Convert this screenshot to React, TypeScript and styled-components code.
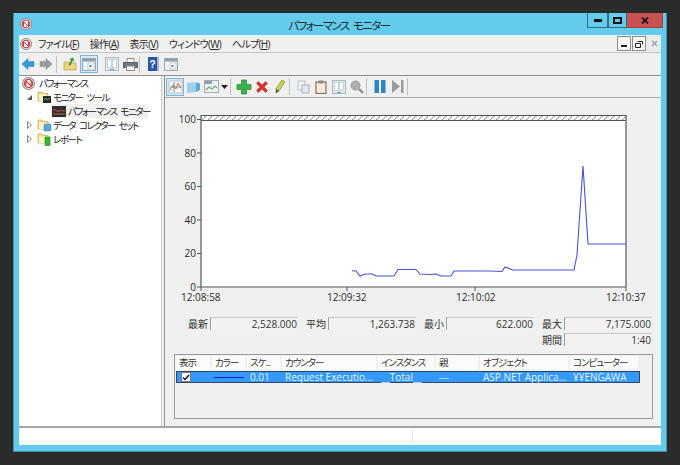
import React from "react";
import styled, { createGlobalStyle } from "styled-components";

const GlobalStyle = createGlobalStyle`
  html, body {
    margin: 0;
    padding: 0;
    background: #2b2b2b;
  }
  body {
    font-family: "Open Sans", "Noto Sans CJK JP", sans-serif;
    font-feature-settings: "palt";
    font-size: 10px;
    color: #222;
  }
  * {
    box-sizing: border-box;
  }
`;

const Desktop = styled.div`
  width: 680px;
  height: 465px;
  padding: 13px;
  background: #2b2b2b;
  overflow: hidden;
`;

const Window = styled.div`
  width: 654px;
  height: 439px;
  background: #63cbeb;
  border: 1px solid #3d8fa8;
  border-top: none;
  display: flex;
  flex-direction: column;
  padding: 0 5px 6px 5px;
`;

const TitleBar = styled.div`
  height: 22px;
  flex: none;
  display: flex;
  align-items: center;
  position: relative;
  margin: 0 -5px;
  padding-left: 6px;
`;

const Title = styled.div`
  flex: 1;
  text-align: center;
  font-size: 11.5px;
  letter-spacing: -1.6px;
  word-spacing: 3px;
  color: #1c2a30;
  padding-top: 1px;
  margin-left: -20px;
`;

const CaptionButtons = styled.div`
  position: absolute;
  top: 0;
  right: 3px;
  display: flex;
`;

const CaptionButton = styled.div<{ $w: number; $close?: boolean }>`
  width: ${(p) => p.$w}px;
  height: 15px;
  background: ${(p) => (p.$close ? "#c75050" : "#63cbeb")};
  border: 1px solid ${(p) => (p.$close ? "#a84040" : "#2f6f86")};
  border-top: none;
  border-left-width: ${(p) => (p.$close ? 0 : 1)}px;
  display: flex;
  align-items: center;
  justify-content: center;
`;

const Client = styled.div`
  flex: 1;
  background: #f0f0f0;
  display: flex;
  flex-direction: column;
  min-height: 0;
`;

const MenuBar = styled.div`
  height: 18px;
  flex: none;
  display: flex;
  align-items: center;
  border-bottom: 1px solid #c4c4c4;
  padding-left: 1px;
`;

const Menus = styled.div`
  display: flex;
  gap: 11px;
  margin-left: 6px;
`;

const MenuItem = styled.span`
  font-size: 10px;
  letter-spacing: -0.7px;
  color: #2a2a2a;
  & > u {
    text-underline-offset: 1px;
  }
`;

const MdiButtons = styled.div`
  margin-left: auto;
  display: flex;
  gap: 1px;
`;

const MdiButton = styled.div<{ $off?: boolean }>`
  width: 14px;
  height: 15px;
  background: ${(p) => (p.$off ? "#ececec" : "#f8f8f8")};
  border: 1px solid ${(p) => (p.$off ? "#e6e6e6" : "#8c8c8c")};
  display: flex;
  align-items: center;
  justify-content: center;
  color: #8a8f99;
`;

const Toolbar = styled.div<{ $h: number }>`
  height: ${(p) => p.$h}px;
  flex: none;
  display: flex;
  align-items: center;
`;

const ToolButton = styled.div<{ $active?: boolean; $w?: number }>`
  width: ${(p) => p.$w ?? 18}px;
  height: 18px;
  flex: none;
  display: flex;
  align-items: center;
  justify-content: center;
  background: ${(p) => (p.$active ? "#d8e9f5" : "transparent")};
  border: 1px solid ${(p) => (p.$active ? "#7db4d8" : "transparent")};
`;

const Separator = styled.div<{ $left?: number; $right?: number }>`
  width: 1px;
  height: 17px;
  flex: none;
  background: #c2c2c2;
  margin-left: ${(p) => p.$left ?? 1}px;
  margin-right: ${(p) => p.$right ?? 4}px;
`;

const Spacer = styled.div<{ $w: number }>`
  width: ${(p) => p.$w}px;
  flex: none;
`;

const Panes = styled.div`
  height: 353px;
  flex: none;
  display: flex;
  border-top: 1px solid #8f8f8f;
  border-bottom: 2px solid #a6a6a6;
`;

const Tree = styled.div`
  width: 143px;
  flex: none;
  background: #fff;
  border-right: 1px solid #c8c8c8;
`;

const TreeRow = styled.div<{ $indent: number; $selected?: boolean }>`
  height: 14px;
  display: flex;
  align-items: center;
  margin-left: ${(p) => p.$indent}px;
  padding-left: ${(p) => (p.$selected ? 1 : 0)}px;
  background: ${(p) => (p.$selected ? "#f0f0f0" : "transparent")};
  width: ${(p) => (p.$selected ? "97px" : "auto")};
  gap: ${(p) => (p.$selected ? 2 : 1)}px;
  font-size: 9.5px;
  letter-spacing: -1.5px;
  word-spacing: 3px;
  white-space: pre;
  & > svg {
    flex: none;
  }
`;

const Expander = styled.span`
  width: 13px;
  flex: none;
  display: flex;
  justify-content: center;
`;

const Splitter = styled.div`
  width: 2px;
  flex: none;
  background: #f0f0f0;
`;

const RightPane = styled.div`
  flex: 1;
  min-width: 0;
  display: flex;
  flex-direction: column;
  border-left: 1px solid #8f8f8f;
`;

const RightToolbar = styled(Toolbar)`
  border-bottom: 1px solid #a9a9a9;
  padding-left: 1px;
`;

const ChartSvg = styled.svg`
  display: block;
  flex: none;
`;

const AxisText = styled.text`
  font-family: "Open Sans", sans-serif;
  font-size: 10px;
  fill: #2a2a2a;
`;

const Stats = styled.div`
  display: grid;
  grid-template-columns: repeat(4, 30px 88px);
  row-gap: 3px;
  margin: 12px 0 0 15px;
  width: 472px;
  grid-auto-rows: 13px;
`;

const StatLabel = styled.div<{ $second?: boolean }>`
  grid-column: ${(p) => (p.$second ? 7 : "auto")};
  text-align: right;
  padding-right: 2px;
  line-height: 14px;
  font-size: 10px;
  color: #333;
`;

const StatValue = styled.div<{ $second?: boolean }>`
  grid-column: ${(p) => (p.$second ? 8 : "auto")};
  width: 88px;
  height: 13px;
  background: #f2f2f2;
  border-left: 1px solid #a0a0a0;
  border-top: 1px solid #c8c8c8;
  text-align: right;
  padding-right: 1px;
  line-height: 12px;
  font-size: 10px;
  color: #333;
`;

const CounterTable = styled.div`
  margin: 8px 0 0 9px;
  width: 479px;
  height: 65px;
  background: #f0f0f0;
  border: 1px solid #9a9a9a;
  padding: 1px 0 0 1px;
`;

const Columns = styled.div`
  display: grid;
  width: 464px;
  grid-template-columns: 36px 35px 35px 96px 58px 44px 90px 70px;
`;

const HeaderRow = styled(Columns)`
  height: 14px;
  align-items: stretch;
`;

const HeaderCell = styled.div`
  background: #fbfbfb;
  margin-right: 2px;
  padding-left: 3px;
  line-height: 13px;
  font-size: 9.5px;
  letter-spacing: -1px;
  color: #333;
  white-space: nowrap;
`;

const SelectedRow = styled(Columns)`
  height: 12px;
  margin-top: 1px;
  background: #3399ff;
  box-shadow: inset 0 0 0 1px #31486a;
  color: #e8f4ff;
  align-items: center;
`;

const RowCell = styled.div`
  padding-left: 3px;
  line-height: 10px;
  font-size: 10px;
  white-space: nowrap;
`;

const CheckBox = styled.div`
  width: 10px;
  height: 10px;
  margin-left: 5px;
  background: #fff;
  border: 1px solid #7a7a7a;
  display: flex;
  align-items: center;
  justify-content: center;
`;

const ColorSample = styled.div`
  width: 30px;
  height: 1px;
  margin-left: 2px;
  background: #1020c0;
`;

const StatusBar = styled.div`
  height: 17px;
  flex: none;
  background: #fff;
  display: flex;
`;

const StatusPart = styled.div<{ $grow?: boolean }>`
  width: ${(p) => (p.$grow ? "394px" : "auto")};
  flex: ${(p) => (p.$grow ? "none" : 1)};
  border-right: ${(p) => (p.$grow ? "1px solid #ececec" : "none")};
`;

const AppIcon = ({ size = 12 }: { size?: number }) => (
  <svg width={size} height={size} viewBox="0 0 12 12">
    <circle cx="6" cy="6" r="5.5" fill="#f4f4f4" stroke="#8a8a8a" />
    <circle cx="6" cy="6" r="3.8" fill="none" stroke="#c93a3a" strokeWidth="1.1" />
    <path d="M3.5 8.5V3.5L8.5 8.5V3.5" fill="none" stroke="#c93a3a" strokeWidth="1" />
  </svg>
);

const Folder = ({ badge }: { badge?: "chart" | "disc" | "green" }) => (
  <svg width="15" height="14" viewBox="0 0 15 14">
    <path d="M1 2h4l1 1.5h5V11H1z" fill="#f3dc90" stroke="#c4a850" strokeWidth="0.7" />
    <path d="M2 4.5h8V11H2z" fill="#fdf3c8" />
    {badge === "chart" && (
      <g>
        <rect x="6" y="6" width="8" height="7" fill="#2a2a2a" />
        <path d="M7 10l2-2 1 2 3-2" fill="none" stroke="#5fc05f" strokeWidth="0.8" />
      </g>
    )}
    {badge === "disc" && <rect x="7" y="6" width="7" height="7" rx="1" fill="#59a6d8" stroke="#3a7fae" strokeWidth="0.5" />}
    {badge === "green" && <rect x="8" y="5" width="5" height="8.5" fill="#35b52f" stroke="#1f8a1b" strokeWidth="0.6" />}
  </svg>
);

const Arrow = ({ left, color, edge }: { left?: boolean; color: string; edge: string }) => (
  <svg width="14" height="12" viewBox="0 0 14 12">
    <path
      d={left ? "M1 6L7 0.5v3h6v5H7v3z" : "M13 6L7 0.5v3H1v5h6v3z"}
      fill={color}
      stroke={edge}
      strokeWidth="0.5"
      strokeLinejoin="round"
    />
  </svg>
);

const PanelIcon = ({ tone = "#2e8b57" }: { tone?: string }) => (
  <svg width="14" height="13" viewBox="0 0 14 13">
    <rect x="0.5" y="0.5" width="13" height="12" fill="#eef1f3" stroke="#9aa8b2" />
    <rect x="1" y="1" width="12" height="2.5" fill="#8f9ea8" />
    <rect x="6" y="5" width="6" height="6" fill="#fff" stroke="#a8b4bc" strokeWidth="0.6" />
    <path d="M7.5 6.5l3 1.5-3 1.5z" fill={tone} />
  </svg>
);

const DocIcon = () => (
  <svg width="14" height="14" viewBox="0 0 14 14">
    <rect x="0.5" y="0.5" width="13" height="13" fill="#e3ebf0" stroke="#a9b8c2" />
    <rect x="2.5" y="2.5" width="4" height="8" fill="#fff" stroke="#b5c2ca" strokeWidth="0.7" />
    <rect x="7.5" y="2.5" width="4" height="8" fill="#fff" stroke="#b5c2ca" strokeWidth="0.7" />
    <path d="M5 12.5h4" stroke="#5aa0d0" />
  </svg>
);

const PrintIcon = () => (
  <svg width="15" height="13" viewBox="0 0 15 13">
    <rect x="4" y="0.5" width="7" height="4" fill="#f6f6f6" stroke="#8d8d8d" />
    <rect x="0.5" y="4.5" width="14" height="5" fill="#70767b" stroke="#5d6266" />
    <rect x="3.5" y="8" width="8" height="4.5" fill="#f6f6f6" stroke="#8d8d8d" />
  </svg>
);

const HelpIcon = () => (
  <svg width="11" height="14" viewBox="0 0 11 14">
    <rect width="11" height="14" fill="#2b55a8" />
    <rect x="9" width="2" height="14" fill="#a5b6d6" />
    <text x="4.5" y="11" textAnchor="middle" fontSize="10" fontWeight="700" fill="#fff" fontFamily="Liberation Sans">
      ?
    </text>
  </svg>
);

const UpFolder = () => (
  <svg width="14" height="14" viewBox="0 0 14 14">
    <path d="M1 5h4l1 1h7v7H1z" fill="#efd47e" stroke="#c0a040" strokeWidth="0.7" />
    <path d="M7 9V3H5l3-3 3 3H9v5z" fill="#3f9c3a" transform="rotate(25 8 5)" />
  </svg>
);

const GraphIcon = () => (
  <svg width="15" height="14" viewBox="0 0 15 14">
    <rect x="1" y="1" width="13" height="12" fill="#f7f7ee" stroke="#9bb0bf" strokeWidth="0.6" />
    <path d="M2 10l3-5 3 4 2-6 3 5" fill="none" stroke="#d9534f" strokeWidth="0.9" />
    <path d="M2 7h11" stroke="#5aa85a" strokeWidth="0.9" />
    <path d="M6 2v10" stroke="#4f86c8" strokeWidth="0.9" />
  </svg>
);

const CubeIcon = () => (
  <svg width="15" height="14" viewBox="0 0 15 14">
    <path d="M1 3l9-1v10l-9 1z" fill="#9fd0ec" />
    <path d="M10 2l4 1.5V10l-4 2z" fill="#5ea8d4" />
    <path d="M1 3l4-2 9 2.5-4-1.5z" fill="#d5edf9" />
  </svg>
);

const HistogramIcon = () => (
  <svg width="15" height="13" viewBox="0 0 15 13">
    <rect x="0.5" y="0.5" width="14" height="12" fill="#eef2f5" stroke="#a3b0ba" />
    <rect x="1" y="1" width="7" height="3" fill="#8f9ea8" />
    <path d="M2 10l3-3 3 2 3-3 2 2" fill="none" stroke="#6fae6f" strokeWidth="1.2" />
  </svg>
);

const Plus = () => (
  <svg width="16" height="16" viewBox="0 0 16 16">
    <path d="M5.5 1h5v4.5H15v5h-4.5V15h-5v-4.5H1v-5h4.5z" fill="#37b34a" stroke="#1f8a35" strokeWidth="0.7" strokeLinejoin="round" />
  </svg>
);

const Cross = () => (
  <svg width="14" height="14" viewBox="0 0 14 14">
    <path d="M1.5 3.5l2-2L7 5l3.5-3.5 2 2L9 7l3.5 3.5-2 2L7 9l-3.5 3.5-2-2L5 7z" fill="#e0312b" stroke="#b32320" strokeWidth="0.5" />
  </svg>
);

const Pencil = () => (
  <svg width="12" height="15" viewBox="0 0 12 15">
    <path d="M8 1l3 2-6 9-3 2 0-4z" fill="#c8d44a" stroke="#7f8a3a" strokeWidth="0.7" />
    <path d="M2 10l3 2-3 2z" fill="#555" />
  </svg>
);

const CopyIcon = () => (
  <svg width="13" height="14" viewBox="0 0 13 14">
    <rect x="1" y="1" width="7" height="9" fill="#f0f3f6" stroke="#b4bec6" />
    <rect x="5" y="5" width="7" height="8" fill="#e2e8ee" stroke="#a5b0ba" />
  </svg>
);

const PasteIcon = () => (
  <svg width="12" height="14" viewBox="0 0 12 14">
    <rect x="1" y="2" width="10" height="11.5" fill="#f4ecdf" stroke="#8f6f50" strokeWidth="1.2" />
    <rect x="3.5" y="0.5" width="5" height="3" fill="#8a8a8a" />
  </svg>
);

const ZoomIcon = () => (
  <svg width="14" height="14" viewBox="0 0 14 14">
    <circle cx="5.5" cy="5.5" r="4.5" fill="#b0b0b0" stroke="#9a9a9a" />
    <path d="M9 9l4 4" stroke="#8c8c8c" strokeWidth="2.4" />
  </svg>
);

const PauseIcon = () => (
  <svg width="12" height="13" viewBox="0 0 12 13">
    <rect x="0.5" width="4.5" height="13" fill="#2b86c5" />
    <rect x="7" width="4.5" height="13" fill="#2b86c5" />
  </svg>
);

const StepIcon = () => (
  <svg width="12" height="13" viewBox="0 0 12 13">
    <path d="M0 0l8 6.5L0 13z" fill="#9a9a9a" />
    <rect x="9" width="2.5" height="13" fill="#9a9a9a" />
  </svg>
);

const Triangle = ({ open }: { open?: boolean }) => (
  <svg width="7" height="8" viewBox="0 0 7 8">
    {open ? (
      <path d="M6 2v5H1z" fill="#555" />
    ) : (
      <path d="M1.5 0.5L5.5 4 1.5 7.5z" fill="#fff" stroke="#8a8a8a" />
    )}
  </svg>
);

const MonitorIcon = () => (
  <svg width="14" height="11" viewBox="0 0 14 11">
    <rect width="14" height="11" fill="#2e2e2e" />
    <path d="M1 4h3l2 2 2-2 2 1h3" fill="none" stroke="#d9534f" />
    <path d="M1 8h12" stroke="#c96b3a" />
  </svg>
);

const menus: [string, string][] = [
  ["ファイル", "F"],
  ["操作", "A"],
  ["表示", "V"],
  ["ウィンドウ", "W"],
  ["ヘルプ", "H"],
];

const yTicks = [100, 80, 60, 40, 20, 0];
const xTicks: [number, number, string][] = [
  [201, 181, "12:08:58"],
  [347, 327, "12:09:32"],
  [475, 456, "12:10:02"],
  [626, 606, "12:10:37"],
];
const line =
  "352,270.7 356,271 360,276 365,274 372,274 376,276 394,276 398,269.5 416,269.5 420,274 430,274.5 436,274 441,276 451,276 454,271 490,271 502,271.5 505,267 513,270 574,270 577,255 583,166 588,244 626,244";

const Chart = () => {
  const hatch = [];
  for (let x = 202; x < 626; x += 6) {
    hatch.push(`M${x} 120L${x + 5} 115.5`);
  }
  return (
    <ChartSvg width="495" height="207" viewBox="165 98 495 207">
      <rect x="201" y="115" width="425" height="172" fill="#fff" />
      <path d={hatch.join("")} stroke="#8a8a8a" strokeWidth="1" fill="none" />
      <path d="M201 115.5H626M201 120.5H626" stroke="#555" strokeWidth="1" />
      <path d="M201 115V287M626 115V287" stroke="#6e6e6e" strokeWidth="1.4" fill="none" />
      <path d="M201 287H626" stroke="#8a8a8a" strokeWidth="1.6" />
      {yTicks.map((v, i) => (
        <g key={v}>
          <path d={`M197 ${119.5 + i * 33.5}H201`} stroke="#555" />
          <AxisText x="196" y={123 + i * 33.5} textAnchor="end">
            {v}
          </AxisText>
        </g>
      ))}
      {xTicks.map(([x, tx, label]) => (
        <g key={label}>
          <path d={`M${x} 287V291`} stroke="#555" />
          <AxisText x={tx} y="301">
            {label}
          </AxisText>
        </g>
      ))}
      <polyline points={line} fill="none" stroke="#4a52d0" strokeWidth="1.1" />
    </ChartSvg>
  );
};

const App = () => {
  return (
    <Desktop>
      <GlobalStyle />
      <Window>
        <TitleBar>
          <AppIcon />
          <Title>パフォーマンス モニター</Title>
          <CaptionButtons>
            <CaptionButton $w={21}>
              <svg width="8" height="3"><rect width="8" height="3" fill="#111" /></svg>
            </CaptionButton>
            <CaptionButton $w={19}>
              <svg width="9" height="7"><rect x="1" y="1" width="7" height="5" fill="none" stroke="#111" strokeWidth="2" /></svg>
            </CaptionButton>
            <CaptionButton $w={36} $close>
              <svg width="8" height="7" viewBox="0 0 8 7"><path d="M1 0.5L7 6.5M7 0.5L1 6.5" stroke="#1a1a1a" strokeWidth="1.8" /></svg>
            </CaptionButton>
          </CaptionButtons>
        </TitleBar>
        <Client>
          <MenuBar>
            <AppIcon />
            <Menus>
              {menus.map(([name, key]) => (
                <MenuItem key={key}>
                  {name}(<u>{key}</u>)
                </MenuItem>
              ))}
            </Menus>
            <MdiButtons>
              <MdiButton>
                <svg width="6" height="7"><rect y="5" width="6" height="2" fill="#222" /></svg>
              </MdiButton>
              <MdiButton>
                <svg width="8" height="8" viewBox="0 0 8 8"><path d="M2.5 1.5h5v3M0.5 3.5h5v4h-5z" fill="none" stroke="#222" /></svg>
              </MdiButton>
              <MdiButton $off>
                <svg width="7" height="7" viewBox="0 0 7 7"><path d="M1 1l5 5M6 1L1 6" stroke="#9aa0aa" strokeWidth="1.4" /></svg>
              </MdiButton>
            </MdiButtons>
          </MenuBar>
          <Toolbar $h={22}>
            <ToolButton><Arrow left color="#3a9ad9" edge="#2b7cb3" /></ToolButton>
            <ToolButton><Arrow color="#9c9c9c" edge="#858585" /></ToolButton>
            <Separator />
            <ToolButton><UpFolder /></ToolButton>
            <Spacer $w={1} />
            <ToolButton $active><PanelIcon /></ToolButton>
            <Spacer $w={5} />
            <ToolButton><DocIcon /></ToolButton>
            <ToolButton><PrintIcon /></ToolButton>
            <Separator $left={0} />
            <ToolButton><HelpIcon /></ToolButton>
            <ToolButton><PanelIcon tone="#3f9c5a" /></ToolButton>
          </Toolbar>
          <Panes>
            <Tree>
              <TreeRow $indent={3}>
                <AppIcon size={13} />
                <Spacer $w={2} />
                パフォーマンス
              </TreeRow>
              <TreeRow $indent={4}>
                <Expander><Triangle open /></Expander>
                <Folder badge="chart" />
                モニター ツール
              </TreeRow>
              <TreeRow $indent={32} $selected>
                <MonitorIcon />
                パフォーマンス モニター
              </TreeRow>
              <TreeRow $indent={4}>
                <Expander><Triangle /></Expander>
                <Folder badge="disc" />
                データ コレクター セット
              </TreeRow>
              <TreeRow $indent={4}>
                <Expander><Triangle /></Expander>
                <Folder badge="green" />
                レポート
              </TreeRow>
            </Tree>
            <Splitter />
            <RightPane>
              <RightToolbar $h={22}>
                <ToolButton $active><GraphIcon /></ToolButton>
                <ToolButton><CubeIcon /></ToolButton>
                <ToolButton><HistogramIcon /></ToolButton>
                <ToolButton $w={9}>
                  <svg width="7" height="4"><path d="M0 0h7L3.5 4z" fill="#222" /></svg>
                </ToolButton>
                <Separator />
                <ToolButton><Plus /></ToolButton>
                <ToolButton><Cross /></ToolButton>
                <ToolButton><Pencil /></ToolButton>
                <Separator $left={0} />
                <ToolButton><CopyIcon /></ToolButton>
                <ToolButton><PasteIcon /></ToolButton>
                <ToolButton><DocIcon /></ToolButton>
                <ToolButton><ZoomIcon /></ToolButton>
                <Separator $left={0} />
                <ToolButton><PauseIcon /></ToolButton>
                <ToolButton><StepIcon /></ToolButton>
                <Separator $left={0} />
              </RightToolbar>
              <Chart />
              <Stats>
                <StatLabel>最新</StatLabel>
                <StatValue>2,528.000</StatValue>
                <StatLabel>平均</StatLabel>
                <StatValue>1,263.738</StatValue>
                <StatLabel>最小</StatLabel>
                <StatValue>622.000</StatValue>
                <StatLabel>最大</StatLabel>
                <StatValue>7,175.000</StatValue>
                <StatLabel $second>期間</StatLabel>
                <StatValue $second>1:40</StatValue>
              </Stats>
              <CounterTable>
                <HeaderRow>
                  <HeaderCell>表示</HeaderCell>
                  <HeaderCell>カラー</HeaderCell>
                  <HeaderCell>スケ...</HeaderCell>
                  <HeaderCell>カウンター</HeaderCell>
                  <HeaderCell>インスタンス</HeaderCell>
                  <HeaderCell>親</HeaderCell>
                  <HeaderCell>オブジェクト</HeaderCell>
                  <HeaderCell>コンピューター</HeaderCell>
                </HeaderRow>
                <SelectedRow>
                  <CheckBox>
                    <svg width="8" height="7" viewBox="0 0 8 7"><path d="M1 3.5L3 5.5 7 1" fill="none" stroke="#111" strokeWidth="1.5" /></svg>
                  </CheckBox>
                  <ColorSample />
                  <RowCell>0.01</RowCell>
                  <RowCell>Request Executio...</RowCell>
                  <RowCell>__Total__</RowCell>
                  <RowCell>---</RowCell>
                  <RowCell>ASP.NET Applica...</RowCell>
                  <RowCell>¥¥ENGAWA</RowCell>
                </SelectedRow>
              </CounterTable>
            </RightPane>
          </Panes>
          <StatusBar>
            <StatusPart $grow />
            <StatusPart />
          </StatusBar>
        </Client>
      </Window>
    </Desktop>
  );
};

export default App;
